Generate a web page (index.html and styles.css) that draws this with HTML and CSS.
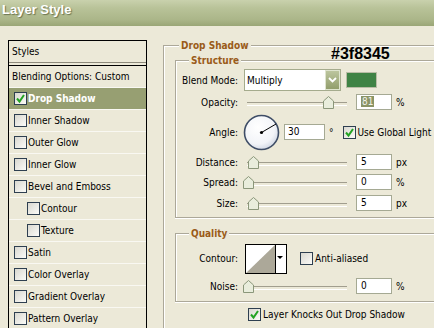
FILE: index.html
```html
<!DOCTYPE html>
<html lang="en">
<head>
    <meta charset="UTF-8">
    <title>Layer Style</title>
    <link rel="stylesheet" href="styles.css">
</head>
<body>
    <div class="titlebar">Layer Style</div>

    <div class="dialog">
        <!-- effects list -->
        <ul class="style-list">
            <li class="style-head">Styles</li>
            <li class="style-blend">Blending Options: Custom</li>
            <li class="selected">
                <span class="cb"><svg viewBox="0 0 11 11"><path d="M2 5.5 L4.5 8.5 L9 2" /></svg></span>Drop Shadow
            </li>
            <li><span class="cb"></span>Inner Shadow</li>
            <li><span class="cb"></span>Outer Glow</li>
            <li><span class="cb"></span>Inner Glow</li>
            <li><span class="cb"></span>Bevel and Emboss</li>
            <li class="sub"><span class="cb"></span>Contour</li>
            <li class="sub"><span class="cb"></span>Texture</li>
            <li><span class="cb"></span>Satin</li>
            <li><span class="cb"></span>Color Overlay</li>
            <li><span class="cb"></span>Gradient Overlay</li>
            <li><span class="cb"></span>Pattern Overlay</li>
        </ul>

        <div class="settings">
            <div class="group outer">
                <div class="group-title">Drop Shadow</div>
                <span class="annotation">#3f8345</span>

                <!-- Structure -->
                <div class="group inner structure">
                    <div class="group-title">Structure</div>

                    <div class="row row-blend">
                        <span class="label">Blend Mode:</span>
                        <div class="select">
                            <span>Multiply</span>
                            <span class="select-btn">
                                <svg width="9" height="6" viewBox="0 0 9 6"><path d="M1 1 L4.5 4.5 L8 1" /></svg>
                            </span>
                        </div>
                        <span class="swatch"></span>
                    </div>

                    <div class="row">
                        <span class="label">Opacity:</span>
                        <div class="slider"><svg class="thumb" style="left:79px" width="11" height="13" viewBox="0 0 11 13"><path d="M0.5 5 L5.5 0.5 L10.5 5 L10.5 12.5 L0.5 12.5 Z" /></svg></div>
                        <span class="num"><span class="hl">81</span></span>
                        <span class="unit">%</span>
                    </div>

                    <div class="row row-angle">
                        <span class="label">Angle:</span>
                        <svg class="dial" width="37" height="37" viewBox="0 0 37 37">
                            <defs>
                                <radialGradient id="dialFill" cx="0.4" cy="0.35" r="0.7">
                                    <stop offset="0" stop-color="#ffffff" />
                                    <stop offset="0.7" stop-color="#f2f4f8" />
                                    <stop offset="1" stop-color="#cdd4e2" />
                                </radialGradient>
                            </defs>
                            <circle cx="18.5" cy="18.5" r="17" fill="url(#dialFill)" stroke="#3e4d66" stroke-width="1.6" />
                            <line x1="18.5" y1="18.5" x2="33" y2="10" stroke="#000" stroke-width="1" />
                            <circle cx="18.5" cy="18.5" r="1.6" fill="#000" />
                        </svg>
                        <span class="num num-angle">30</span>
                        <span class="deg">°</span>
                        <span class="cb cb-light"><svg viewBox="0 0 11 11"><path d="M2 5.5 L4.5 8.5 L9 2" /></svg></span>
                        <span class="cb-text">Use Global Light</span>
                    </div>

                    <div class="row">
                        <span class="label">Distance:</span>
                        <div class="slider"><svg class="thumb" style="left:4px" width="11" height="13" viewBox="0 0 11 13"><path d="M0.5 5 L5.5 0.5 L10.5 5 L10.5 12.5 L0.5 12.5 Z" /></svg></div>
                        <span class="num">5</span>
                        <span class="unit">px</span>
                    </div>

                    <div class="row">
                        <span class="label">Spread:</span>
                        <div class="slider"><svg class="thumb" style="left:-1px" width="11" height="13" viewBox="0 0 11 13"><path d="M0.5 5 L5.5 0.5 L10.5 5 L10.5 12.5 L0.5 12.5 Z" /></svg></div>
                        <span class="num">0</span>
                        <span class="unit">%</span>
                    </div>

                    <div class="row row-size">
                        <span class="label">Size:</span>
                        <div class="slider"><svg class="thumb" style="left:4px" width="11" height="13" viewBox="0 0 11 13"><path d="M0.5 5 L5.5 0.5 L10.5 5 L10.5 12.5 L0.5 12.5 Z" /></svg></div>
                        <span class="num">5</span>
                        <span class="unit">px</span>
                    </div>
                </div>

                <!-- Quality -->
                <div class="group inner quality">
                    <div class="group-title">Quality</div>

                    <div class="row row-contour">
                        <span class="label">Contour:</span>
                        <svg class="contour" width="42" height="30" viewBox="0 0 42 30">
                            <rect x="0.5" y="0.5" width="41" height="29" fill="#fff" stroke="#000" />
                            <polygon points="1,29 30,1 30,29" fill="#aca899" />
                            <line x1="30.5" y1="0" x2="30.5" y2="30" stroke="#000" />
                            <polygon points="32,12 38,12 35,15" fill="#000" />
                        </svg>
                        <span class="cb cb-aa"></span>
                        <span class="cb-text">Anti-aliased</span>
                    </div>

                    <div class="row row-noise">
                        <span class="label">Noise:</span>
                        <div class="slider"><svg class="thumb" style="left:-1px" width="11" height="13" viewBox="0 0 11 13"><path d="M0.5 5 L5.5 0.5 L10.5 5 L10.5 12.5 L0.5 12.5 Z" /></svg></div>
                        <span class="num">0</span>
                        <span class="unit">%</span>
                    </div>
                </div>

                <div class="row row-knock">
                    <span class="cb"><svg viewBox="0 0 11 11"><path d="M2 5.5 L4.5 8.5 L9 2" /></svg></span>
                    <span class="cb-text">Layer Knocks Out Drop Shadow</span>
                </div>
            </div>
        </div>
    </div>
</body>
</html>
```

FILE: styles.css
```css
* {
    margin: 0;
    padding: 0;
    box-sizing: border-box;
}

body {
    width: 434px;
    height: 328px;
    overflow: hidden;
    background-color: #ece9d8;
    font-family: "DejaVu Sans Condensed", "DejaVu Sans", "Liberation Sans", sans-serif;
    font-size: 10px;
    color: #000;
}

.titlebar {
    height: 26px;
    padding: 2px 0 0 2px;
    line-height: 24px;
    font: bold 13px "Liberation Sans", sans-serif;
    color: #fff;
    text-shadow: 1px 1px 1px #6b7450;
    background: linear-gradient(#c9d1ad, #b9c399 30%, #abb689 75%, #9aa676);
}

.dialog {
    display: flex;
    align-items: flex-start;
}

/* left list */
.style-list {
    list-style: none;
    flex-shrink: 0;
    width: 139px;
    height: 288px;
    overflow: hidden;
    margin: 14px 0 0 8px;
    border: 1px solid #000;
    border-bottom: none;
}

.style-list li {
    display: flex;
    align-items: center;
    gap: 1px;
    height: 22px;
    padding-left: 5px;
    border-bottom: 1px solid #f9f8f2;
}

.style-list .style-head {
    height: 22px;
    padding-left: 3px;
    border-bottom: 1px solid #8d8a7b;
    margin-bottom: 2px;
}

.style-list .style-blend {
    height: 23px;
    padding-left: 3px;
    border-top: 1px solid #000;
}

.style-list .selected {
    background-color: #979f72;
    color: #fff;
    font-weight: bold;
}

.style-list .sub {
    padding-left: 18px;
}

/* checkbox */
.cb {
    display: inline-block;
    flex-shrink: 0;
    width: 13px;
    height: 13px;
    border: 1px solid #2e3f50;
    background: linear-gradient(135deg, #d9d8d0, #fbfbf8);
}

.cb svg {
    display: block;
    width: 11px;
    height: 11px;
}

.cb path {
    fill: none;
    stroke: #23a323;
    stroke-width: 2;
}

.cb-text {
    margin-left: 2px;
    white-space: nowrap;
}

/* right side, the groups run on past the window edge */
.settings {
    flex-shrink: 0;
    width: 271px;
    margin-left: 16px;
}

.group {
    border: 1px solid #aca899;
    border-right: none;
    box-shadow: inset 1px 1px #fff, 0 1px #fff;
}

.outer {
    position: relative;
    height: 283px;
    margin-top: 19px;
    padding-left: 11px;
    border-bottom: none;
}

.group-title {
    display: table;
    height: 14px;
    margin: -7px 0 0 13px;
    padding: 0 2px;
    line-height: 14px;
    background-color: #ece9d8;
    color: #9a5b19;
    font-weight: bold;
}

.outer > .group-title {
    margin-left: 4px;
}

.annotation {
    position: absolute;
    left: 167px;
    top: 0;
    font: bold 16px/16px "Liberation Sans", sans-serif;
    color: #000;
}

.inner {
    margin-top: 7px;
}

.structure {
    padding-bottom: 5px;
}

.quality {
    margin-top: 15px;
    padding-bottom: 6px;
}

.row {
    display: flex;
    align-items: center;
    height: 18px;
    margin-top: 2px;
}

.row .label {
    width: 62px;
    text-align: right;
}

.row-blend {
    height: 22px;
    margin-top: 1px;
}

.row-angle {
    height: 38px;
}

.row-size {
    margin-top: 3px;
}

.row-contour {
    height: 31px;
}

.row-noise {
    margin-top: 3px;
}

.row-knock {
    margin-top: 3px;
    padding-left: 73px;
}

.select {
    display: flex;
    align-items: center;
    justify-content: space-between;
    width: 97px;
    height: 22px;
    margin-left: 6px;
    padding-left: 2px;
    border: 1px solid #a5ab8d;
    background-color: #fff;
}

.select-btn {
    display: flex;
    align-items: center;
    justify-content: center;
    width: 15px;
    height: 20px;
    border: 1px solid #dfe4cf;
    background: linear-gradient(#bcc59e, #929e6c);
}

.select-btn path {
    fill: none;
    stroke: #fff;
    stroke-width: 1.8;
}

.swatch {
    width: 31px;
    height: 16px;
    margin-left: 5px;
    border: 1px solid #b9bda6;
    background-color: #3f8345;
}

.slider {
    position: relative;
    width: 104px;
    height: 13px;
    margin-left: 6px;
}

.slider::before {
    content: "";
    position: absolute;
    left: 3px;
    right: 1px;
    top: 6px;
    height: 2px;
    border-top: 1px solid #a19e8e;
    border-bottom: 1px solid #fff;
}

.thumb {
    position: absolute;
    top: 0;
}

.thumb path {
    fill: #e9eddc;
    stroke: #8b977a;
    stroke-width: 1;
}

.num {
    width: 36px;
    height: 16px;
    margin-left: 8px;
    padding-left: 4px;
    line-height: 14px;
    border: 1px solid #a5a993;
    background-color: #fff;
}

.num .hl {
    padding: 0 1px;
    background-color: #8a9466;
    color: #f1f2ea;
}

.unit {
    margin-left: 4px;
}

.dial {
    margin-left: 5px;
}

.num-angle {
    width: 41px;
    margin-left: 4px;
    padding-left: 3px;
}

.deg {
    margin-left: 4px;
}

.cb-light {
    margin-left: 9px;
}

.contour {
    margin-left: 7px;
}

.cb-aa {
    margin-left: 13px;
}
```
